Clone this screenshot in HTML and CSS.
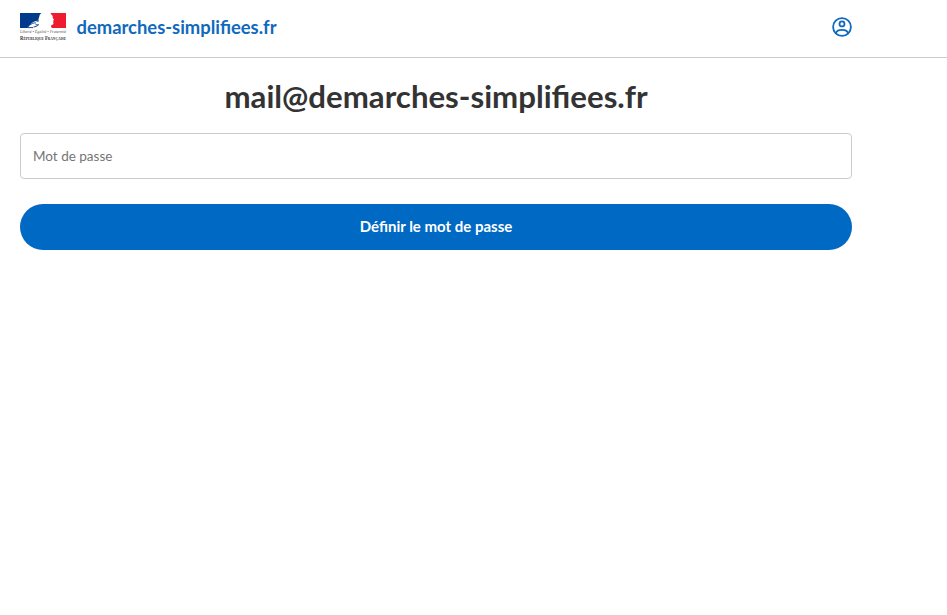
FILE: index.html
```
<!DOCTYPE html>
<html lang="fr">
<head>
<meta charset="utf-8">
<title>demarches-simplifiees.fr</title>
<link rel="stylesheet" href="styles.css">
</head>
<body>
<header class="header">
  <div class="container header-content">
    <a class="brand" href="#">
      <svg class="logo" viewBox="0 0 46 28" aria-hidden="true">
        <path fill="#003a8c" d="M0 0h21.500c-1.300.9-2 2-2.200 3.400-.6 1.300-.7 2.800-1 4.200-3.300.3-6 1.400-8.300 4.400L7.500 15H0z"/>
        <path fill="#ed1c2e" d="M30.500 0H46v15H31.800l-.8-1.500.3-1.300 1.700-.6.500-1.200-.3-1.300.3-.9-.3-.8.8-.7-1.400-2.300.2-1.500-1.300-1.200z"/>
        <path fill="none" stroke="#003a8c" stroke-width=".9" d="M10 12.300c1.500-2.200 4-2.600 6-2.300M13.500 14c2-.2 4-1 5.500-2.600M15.500 11.800h2.500M16.500 8.300l2.500-.4M8 14.600h5"/>
        <text class="motto" x="0" y="20.300" textLength="46" lengthAdjust="spacingAndGlyphs">Liberté • Égalité • Fraternité</text>
        <text class="republic" x="0" y="26.700" textLength="46" lengthAdjust="spacingAndGlyphs">République Française</text>
      </svg>
      <span class="brand-name">demarches-simplifiees.fr</span>
    </a>
    <a class="account" href="#" aria-label="Mon compte">
      <svg class="account-icon" viewBox="0 0 20 20" fill="none" stroke="#0f69bd" stroke-width="1.800">
        <circle cx="10" cy="10" r="8.900"/>
        <circle cx="10" cy="6.900" r="2.500"/>
        <path d="M4 16.400c.3-2.500 2.700-3.500 6-3.500s5.700 1 6 3.500"/>
      </svg>
    </a>
  </div>
</header>
<main class="container">
  <form class="form">
    <h1 class="title">mail@demarches-simplifiees.fr</h1>
    <input class="field" type="password" placeholder="Mot de passe" aria-label="Mot de passe">
    <button class="button" type="button">Définir le mot de passe</button>
  </form>
</main>
</body>
</html>
```
FILE: styles.css
```
* { box-sizing: border-box; }
body {
  margin: 0;
  background: #fff;
  color: #333;
  font-family: Muli, Lato, sans-serif;
}
.container { width: 872px; padding: 0 20px; }
.header { height: 58px; border-bottom: 1px solid #ccc; }
.header-content {
  display: flex;
  justify-content: space-between;
  height: 53px;
  align-items: center;
}
.brand {
  display: flex;
  align-items: center;
  color: #0f69bd;
  text-decoration: none;
}
.logo { width: 46px; height: 28px; overflow: visible; }
.motto { font: italic 4.2px "Liberation Serif", serif; fill: #555; }
.republic { font: small-caps bold 5.4px "Liberation Serif", serif; fill: #333; }
.brand-name {
  margin-left: 10.5px;
  font-size: 18.4px;
  line-height: 24px;
  font-weight: 700;
}
.account { display: flex; }
.account-icon { width: 20px; height: 20px; }
.form { display: flex; flex-direction: column; }
.title {
  margin: 19px 0 18px;
  font-size: 31.2px;
  line-height: 38px;
  font-weight: 700;
  text-align: center;
}
.field {
  height: 46px;
  padding: 0 12px;
  border: 1px solid #ccc;
  border-radius: 4px;
  font-family: inherit;
  font-size: 13.5px;
}
.field::placeholder { color: #757575; opacity: 1; }
.button {
  height: 46px;
  margin-top: 25px;
  padding: 0 0 2px;
  border: 0;
  border-radius: 23px;
  background: #0069c4;
  color: #fff;
  font-family: inherit;
  font-size: 15px;
  font-weight: 700;
}
```
